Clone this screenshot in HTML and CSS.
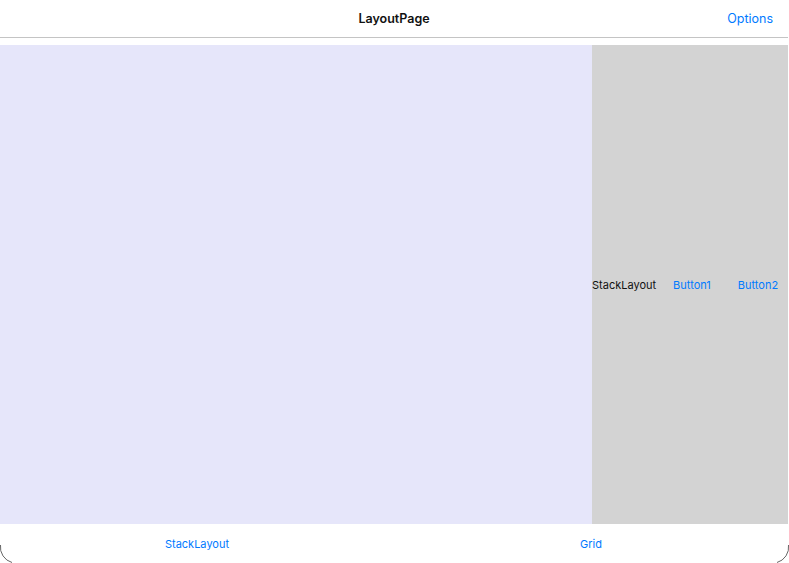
FILE: index.html
```html
<!DOCTYPE html>
<html>
<head>
<meta charset="utf-8">
<link rel="stylesheet" href="styles.css">
</head>
<body>
<div class="screen">
  <header class="navbar">
    <div class="nav-title">LayoutPage</div>
    <div class="nav-action">Options</div>
  </header>
  <div class="spacer"></div>
  <main class="content">
    <div class="left-pane"></div>
    <div class="right-pane">
      <span class="label">StackLayout</span>
      <span class="btn btn1">Button1</span>
      <span class="btn btn2">Button2</span>
    </div>
  </main>
  <nav class="tabbar">
    <div class="tab">StackLayout</div>
    <div class="tab">Grid</div>
  </nav>
  <svg class="corner corner-left" width="20" height="22" viewBox="0 0 20 22"><path d="M0.5 4 A16 16 0 0 0 12 21.5" fill="none" stroke="#666" stroke-width="1"/></svg>
  <svg class="corner corner-right" width="20" height="22" viewBox="0 0 20 22"><path d="M19.5 4 A16 16 0 0 1 8 21.5" fill="none" stroke="#666" stroke-width="1"/></svg>
</div>
</body>
</html>
```
FILE: styles.css
```css
html, body {
  margin: 0;
  padding: 0;
  background: #ffffff;
}
body {
  font-family: Inter, "Liberation Sans", sans-serif;
  width: 789px;
  height: 563px;
  overflow: hidden;
}
.screen {
  position: relative;
  width: 789px;
  height: 563px;
  display: flex;
  flex-direction: column;
}
.navbar {
  height: 37px;
  border-bottom: 1px solid #c4c4c4;
  margin-right: 1px;
  display: flex;
  align-items: center;
  justify-content: center;
  position: relative;
  flex: none;
}
.nav-title {
  font-size: 12.5px;
  font-weight: 600;
  color: #111;
}
.nav-action {
  position: absolute;
  right: 15px;
  top: 11px;
  font-size: 12.5px;
  color: #007aff;
}
.spacer {
  height: 7px;
  flex: none;
}
.content {
  height: 479px;
  flex: none;
  display: flex;
  margin-right: 1px;
}
.left-pane {
  width: 592px;
  background: #e6e6fa;
}
.right-pane {
  flex: 1;
  background: #d3d3d3;
  display: flex;
  align-items: center;
  font-size: 11px;
}
.label {
  color: #111;
}
.btn {
  color: #007aff;
}
.btn1 {
  margin-left: 17px;
}
.btn2 {
  margin-left: 27px;
}
.tabbar {
  flex: 1;
  display: flex;
  margin-right: 1px;
}
.tab {
  flex: 1;
  display: flex;
  justify-content: center;
  align-items: center;
  font-size: 11px;
  color: #007aff;
}
.corner {
  position: absolute;
  bottom: 0;
}
.corner-left { left: 0; }
.corner-right { right: 0; }
```
